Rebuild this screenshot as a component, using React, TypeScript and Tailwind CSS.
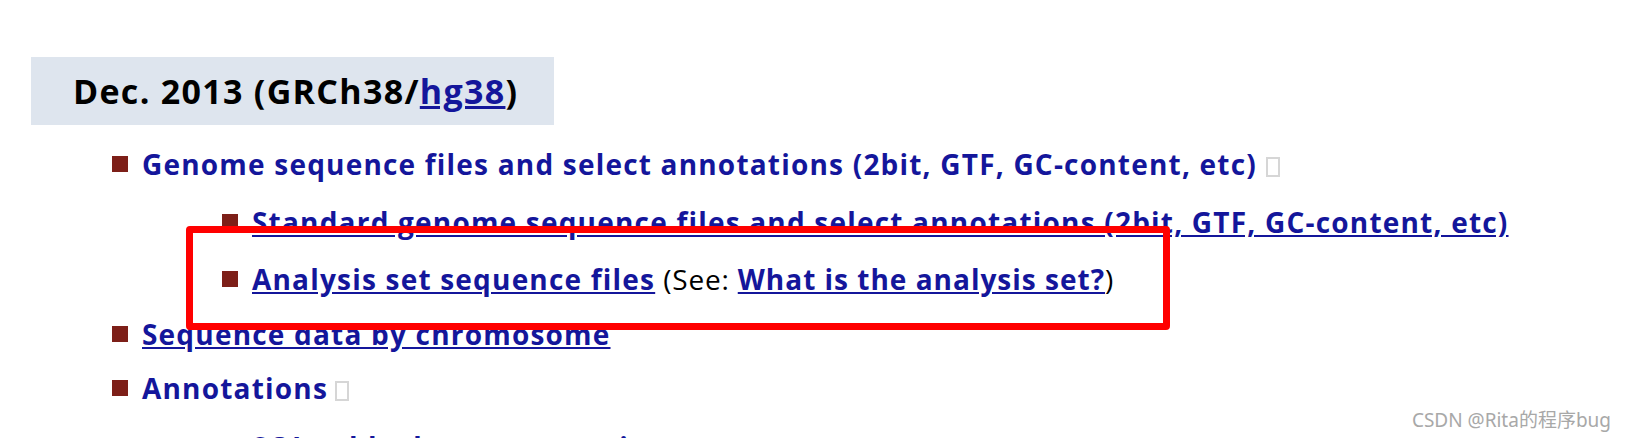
import React from "react";

const Tofu = ({ gap }: { gap: string }) => (
  <span className={`inline-block w-[14px] h-[20px] border-2 border-[#d6d6d6] align-[-2px] ${gap}`} />
);

const Bullet = () => <span className="w-[16px] h-[16px] bg-[#7d1f18] shrink-0 mr-[14px]" />;

export default function App() {
  return (
    <div className="relative w-[1626px] h-[438px] overflow-hidden bg-white font-['Open_Sans',sans-serif]">
      <div className="ml-[31px] mt-[57px] w-[523px] h-[68px] bg-[#dee5ee] flex items-center pl-[42px]">
        <h2 className="text-[34px] font-bold text-black tracking-[1.3px] leading-none">
          Dec. 2013 (GRCh38/<a className="text-[#14169b] underline">hg38</a>)
        </h2>
      </div>

      <ul className="mt-[10px] text-[28px] font-bold text-[#14169b] tracking-[1.2px]">
        <li>
          <div className="flex items-center h-[58px] pl-[112px]">
            <Bullet />
            <span className="leading-none whitespace-nowrap">
              Genome sequence files and select annotations (2bit, GTF, GC-content, etc)
              <Tofu gap="ml-[9px]" />
            </span>
          </div>
          <ul>
            <li className="flex items-center h-[58px] pl-[222px]">
              <Bullet />
              <a className="underline leading-none whitespace-nowrap">
                Standard genome sequence files and select annotations (2bit, GTF, GC-content, etc)
              </a>
            </li>
            <li className="flex items-center h-[56px] pl-[222px]">
              <Bullet />
              <span className="leading-none whitespace-nowrap">
                <a className="underline">Analysis set sequence files</a>
                <span className="font-normal text-black tracking-[0.8px]"> (See: </span>
                <a className="underline tracking-[1px]">What is the analysis set?</a>
                <span className="font-normal text-black">)</span>
              </span>
            </li>
          </ul>
        </li>
        <li className="flex items-center h-[54px] pl-[112px]">
          <Bullet />
          <a className="underline leading-none whitespace-nowrap">Sequence data by chromosome</a>
        </li>
        <li>
          <div className="flex items-center h-[54px] pl-[112px]">
            <Bullet />
            <span className="leading-none whitespace-nowrap">
              Annotations
              <Tofu gap="ml-[7px]" />
            </span>
          </div>
          <ul>
            <li className="flex items-center h-[64px] pl-[222px]">
              <Bullet />
              <a className="underline leading-none whitespace-nowrap">SQL table dump annotations</a>
            </li>
          </ul>
        </li>
      </ul>

      <div className="absolute left-[186px] top-[226px] w-[984px] h-[104px] border-[7px] border-[#ff0000] rounded-[4px] pointer-events-none" />

      <div className="absolute right-[15px] top-[411px] text-[19px] leading-none text-[#a8a8a8] font-['Noto_Sans','Noto_Sans_CJK_SC',sans-serif] [text-shadow:0_0_1px_#ffffff]">
        CSDN @Rita的程序bug
      </div>
    </div>
  );
}
